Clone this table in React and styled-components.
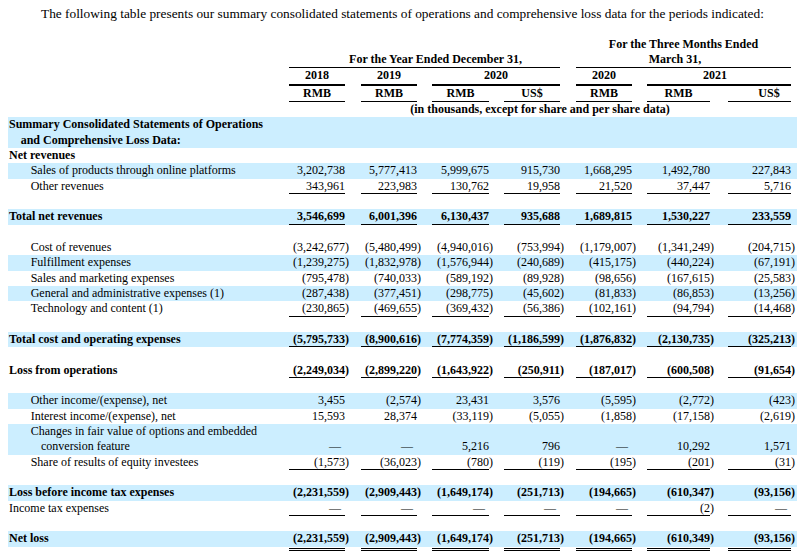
import React from 'react';
import styled, { createGlobalStyle, css } from 'styled-components';

const GlobalStyle = createGlobalStyle`
  html, body { background: #ffffff; }
  body {
    margin: 6px 8px 0 8px;
    font-family: "Liberation Serif", "Times New Roman", serif;
    font-size: 13.333px;
    line-height: 15.33px;
    color: #000000;
  }
`;

const COLS =
  '281px 56px 16px 56px 15px 57px 15px 56px 16px 56px 15px 63px 18px 63px 6px';

const Page = styled.div`
  width: 789px;
`;

const Intro = styled.p`
  margin: 0 0 15.5px 0;
  text-indent: 33px;
  white-space: nowrap;
  font-size: 13.333px;
  line-height: 15.33px;
`;

const Table = styled.div`
  display: flex;
  flex-direction: column;
  font-size: 12px;
  line-height: 15.33px;
`;

const Row = styled.div`
  display: grid;
  grid-template-columns: ${COLS};
  align-items: end;
  background: ${(p) => (p.$shaded ? '#cceeff' : 'transparent')};
  font-weight: ${(p) => (p.$bold ? 700 : 400)};
`;

const BlankRow = styled.div`
  height: 15.33px;
`;

const RuleRow = styled.div`
  display: grid;
  grid-template-columns: ${COLS};
  padding-top: 1px;
`;

const DoubleRule = styled.div`
  grid-column: ${(p) => p.$col};
  height: 1px;
  border-top: 1px solid #000;
  border-bottom: 1px solid #000;
`;

const HeadCell = styled.div`
  grid-column: ${(p) => p.$span};
  text-align: center;
  font-weight: 700;
  white-space: nowrap;
  padding-left: ${(p) => p.$pl || 0}px;
  padding-right: ${(p) => p.$pr || 0}px;
  border-bottom: ${(p) =>
    p.$rule === 'thick' ? '2px solid #000' : p.$rule === 'thin' ? '1px solid #000' : '0'};
`;

const Label = styled.div`
  grid-column: 1;
  padding-left: ${(p) => (p.$level === 1 ? 22.7 : 1)}px;
  padding-right: 6px;
`;

const LabelLine = styled.span`
  display: block;
  white-space: nowrap;
  padding-left: ${(p) => (p.$wrap ? (p.$level === 1 ? 10.3 : 11.7) : 0)}px;
`;

const Num = styled.div`
  text-align: right;
  white-space: nowrap;
  padding-right: ${(p) => (p.$dash ? 4 : 0)}px;
  ${(p) =>
    p.$rule === 'single' &&
    css`
      box-shadow: inset 0 -1px 0 #000;
    `}
`;

const Paren = styled.div`
  text-align: left;
  white-space: nowrap;
`;

const rows = [
  {
    label: ['Summary Consolidated Statements of Operations', 'and Comprehensive Loss Data:'],
    bold: true,
    shaded: true,
  },
  { label: ['Net revenues'], bold: true },
  {
    label: ['Sales of products through online platforms'],
    level: 1,
    shaded: true,
    vals: ['3,202,738', '5,777,413', '5,999,675', '915,730', '1,668,295', '1,492,780', '227,843'],
  },
  {
    label: ['Other revenues'],
    level: 1,
    rule: 'single',
    vals: ['343,961', '223,983', '130,762', '19,958', '21,520', '37,447', '5,716'],
  },
  { blank: true },
  {
    label: ['Total net revenues'],
    bold: true,
    shaded: true,
    rule: 'single',
    vals: ['3,546,699', '6,001,396', '6,130,437', '935,688', '1,689,815', '1,530,227', '233,559'],
  },
  { blank: true },
  {
    label: ['Cost of revenues'],
    level: 1,
    vals: ['(3,242,677)', '(5,480,499)', '(4,940,016)', '(753,994)', '(1,179,007)', '(1,341,249)', '(204,715)'],
  },
  {
    label: ['Fulfillment expenses'],
    level: 1,
    shaded: true,
    vals: ['(1,239,275)', '(1,832,978)', '(1,576,944)', '(240,689)', '(415,175)', '(440,224)', '(67,191)'],
  },
  {
    label: ['Sales and marketing expenses'],
    level: 1,
    vals: ['(795,478)', '(740,033)', '(589,192)', '(89,928)', '(98,656)', '(167,615)', '(25,583)'],
  },
  {
    label: ['General and administrative expenses (1)'],
    level: 1,
    shaded: true,
    vals: ['(287,438)', '(377,451)', '(298,775)', '(45,602)', '(81,833)', '(86,853)', '(13,256)'],
  },
  {
    label: ['Technology and content (1)'],
    level: 1,
    rule: 'single',
    vals: ['(230,865)', '(469,655)', '(369,432)', '(56,386)', '(102,161)', '(94,794)', '(14,468)'],
  },
  { blank: true },
  {
    label: ['Total cost and operating expenses'],
    bold: true,
    shaded: true,
    rule: 'single',
    vals: ['(5,795,733)', '(8,900,616)', '(7,774,359)', '(1,186,599)', '(1,876,832)', '(2,130,735)', '(325,213)'],
  },
  { blank: true },
  {
    label: ['Loss from operations'],
    bold: true,
    rule: 'single',
    vals: ['(2,249,034)', '(2,899,220)', '(1,643,922)', '(250,911)', '(187,017)', '(600,508)', '(91,654)'],
  },
  { blank: true },
  {
    label: ['Other income/(expense), net'],
    level: 1,
    shaded: true,
    vals: ['3,455', '(2,574)', '23,431', '3,576', '(5,595)', '(2,772)', '(423)'],
  },
  {
    label: ['Interest income/(expense), net'],
    level: 1,
    vals: ['15,593', '28,374', '(33,119)', '(5,055)', '(1,858)', '(17,158)', '(2,619)'],
  },
  {
    label: ['Changes in fair value of options and embedded', 'conversion feature'],
    level: 1,
    shaded: true,
    vals: ['—', '—', '5,216', '796', '—', '10,292', '1,571'],
  },
  {
    label: ['Share of results of equity investees'],
    level: 1,
    rule: 'single',
    vals: ['(1,573)', '(36,023)', '(780)', '(119)', '(195)', '(201)', '(31)'],
  },
  { blank: true },
  {
    label: ['Loss before income tax expenses'],
    bold: true,
    shaded: true,
    vals: ['(2,231,559)', '(2,909,443)', '(1,649,174)', '(251,713)', '(194,665)', '(610,347)', '(93,156)'],
  },
  {
    label: ['Income tax expenses'],
    rule: 'single',
    vals: ['—', '—', '—', '—', '—', '(2)', '—'],
  },
  { blank: true },
  {
    label: ['Net loss'],
    bold: true,
    shaded: true,
    vals: ['(2,231,559)', '(2,909,443)', '(1,649,174)', '(251,713)', '(194,665)', '(610,349)', '(93,156)'],
  },
  { doubleRule: true },
];

const NUM_COLS = [2, 4, 6, 8, 10, 12, 14];

function Value({ v, rule }) {
  const neg = v.startsWith('(');
  const dash = v === '—';
  return (
    <>
      <Num $rule={rule} $dash={dash}>
        {neg ? v.slice(0, -1) : v}
      </Num>
      <Paren>{neg ? ')' : ''}</Paren>
    </>
  );
}

function DataRow({ row }) {
  const cells = row.vals || Array(7).fill(null);
  return (
    <Row $shaded={row.shaded} $bold={row.bold}>
      <Label $level={row.level || 0}>
        {row.label.map((line, i) => (
          <LabelLine key={i} $wrap={i > 0} $level={row.level || 0}>
            {line}
          </LabelLine>
        ))}
      </Label>
      {cells.map((v, i) =>
        v === null ? (
          <React.Fragment key={i}>
            <Num />
            <Paren />
          </React.Fragment>
        ) : (
          <Value key={i} v={v} rule={row.rule} />
        )
      )}
    </Row>
  );
}

function renderRow(row, i) {
  if (row.blank) return <BlankRow key={i} />;
  if (row.doubleRule)
    return (
      <RuleRow key={i}>
        {NUM_COLS.map((c) => (
          <DoubleRule key={c} $col={c} />
        ))}
      </RuleRow>
    );
  return <DataRow key={i} row={row} />;
}

export default function App() {
  return (
    <Page>
      <GlobalStyle />
      <Intro>
        The following table presents our summary consolidated statements of operations and comprehensive
        loss data for the periods indicated:
      </Intro>
      <Table>
        <Row>
          <HeadCell $span="10 / 15">For the Three Months Ended</HeadCell>
        </Row>
        <Row>
          <HeadCell $span="2 / 9" $rule="thin" $pl={22}>
            For the Year Ended December 31,
          </HeadCell>
          <HeadCell $span="10 / 15" $rule="thin" $pr={17}>
            March 31,
          </HeadCell>
        </Row>
        <Row>
          <HeadCell $span="2 / 3" $rule="thick">2018</HeadCell>
          <HeadCell $span="4 / 5" $rule="thick">2019</HeadCell>
          <HeadCell $span="6 / 9" $rule="thick">2020</HeadCell>
          <HeadCell $span="10 / 11" $rule="thick">2020</HeadCell>
          <HeadCell $span="12 / 15" $rule="thick" $pr={8}>2021</HeadCell>
        </Row>
        <Row>
          <HeadCell $span="2 / 3" $rule="thin">RMB</HeadCell>
          <HeadCell $span="4 / 5" $rule="thin">RMB</HeadCell>
          <HeadCell $span="6 / 7" $rule="thin">RMB</HeadCell>
          <HeadCell $span="8 / 9" $rule="thin">US$</HeadCell>
          <HeadCell $span="10 / 11" $rule="thin">RMB</HeadCell>
          <HeadCell $span="12 / 13" $rule="thin">RMB</HeadCell>
          <HeadCell $span="14 / 15" $rule="thin" $pl={19}>US$</HeadCell>
        </Row>
        <Row>
          <HeadCell $span="2 / 15">(in thousands, except for share and per share data)</HeadCell>
        </Row>
        {rows.map(renderRow)}
      </Table>
    </Page>
  );
}
